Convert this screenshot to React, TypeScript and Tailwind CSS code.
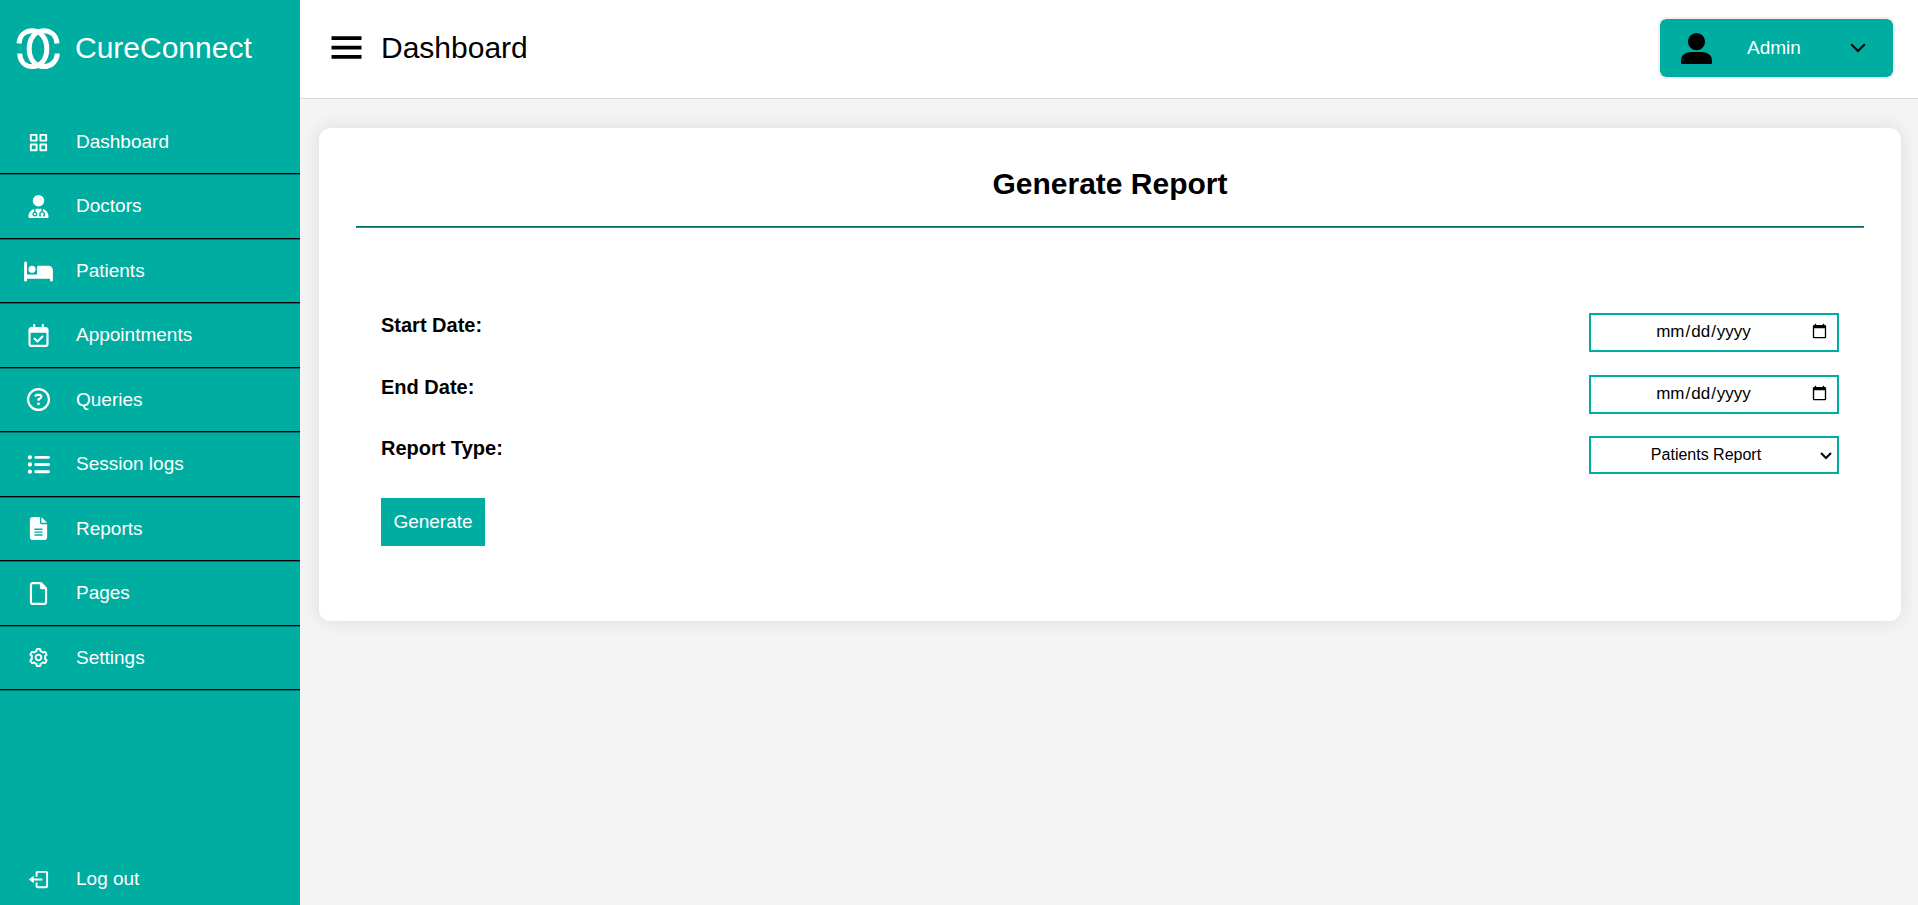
import { useState } from "react";
import type { ReactNode } from "react";
import { BiCog, BiGridAlt, BiLogOut, BiMenu } from "react-icons/bi";
import { FaBed, FaFileLines, FaListUl, FaRegCalendarCheck, FaRegCircleQuestion, FaRegFile, FaUserDoctor } from "react-icons/fa6";

const navItems: { label: string; icon: ReactNode }[] = [
  { label: "Dashboard", icon: <BiGridAlt /> },
  { label: "Doctors", icon: <FaUserDoctor /> },
  { label: "Patients", icon: <FaBed className="h-[23px] w-[29px]" /> },
  { label: "Appointments", icon: <FaRegCalendarCheck /> },
  { label: "Queries", icon: <FaRegCircleQuestion /> },
  { label: "Session logs", icon: <FaListUl /> },
  { label: "Reports", icon: <FaFileLines /> },
  { label: "Pages", icon: <FaRegFile /> },
  { label: "Settings", icon: <BiCog /> },
];

function Logo() {
  return (
    <svg viewBox="0 0 44 42" className="h-[42px] w-11" fill="none" stroke="currentColor" strokeWidth="5" aria-hidden="true">
      <path d="M3 15.500C3.500 8 8.500 2.800 16.500 2.800c8.500 0 14.300 7.700 14.300 17.900s-5.800 17.900-14.300 17.900C8.500 38.600 4 33 3.700 25.500" />
      <path d="M41 15.500C40.500 8 35.500 2.800 27.500 2.800c-8.500 0-14.300 7.700-14.300 17.900s5.800 17.900 14.300 17.900c8 0 13.500-5.600 13.800-13.100" />
    </svg>
  );
}

function PersonIcon() {
  return (
    <svg viewBox="0 0 31 31" className="size-[31px] text-black" fill="currentColor" aria-hidden="true">
      <circle cx="15.500" cy="8.600" r="8.600" />
      <path d="M1 31Q0 31 0 30v-2.500C0 22.500 4.500 19 10 19h11c5.500 0 10 3.500 10 8.500V30q0 1-1 1z" />
    </svg>
  );
}

function Sidebar() {
  return (
    <aside className="flex w-[300px] shrink-0 flex-col bg-[#00ada1] text-white">
      <a href="#home" className="flex h-[111px] items-start gap-[15px] pt-7 pl-4">
        <Logo />
        <span className="text-[30px] leading-10">CureConnect</span>
      </a>
      <nav className="flex grow flex-col justify-between">
        <ul className="grid h-[580px] auto-rows-fr">
          {navItems.map((item) => (
            <li key={item.label} className="flex flex-col">
              <a href={"#" + item.label} className="flex grow items-center text-[19px]">
                <span className="flex w-[76px] justify-center text-[23px]">{item.icon}</span>
                {item.label}
              </a>
              <hr className="border border-x-0 border-t-black border-b-[#006e68]" />
            </li>
          ))}
        </ul>
        <a href="#logout" className="mb-3 flex h-7 items-center text-[19px]">
          <span className="flex w-[76px] justify-center text-[23px]"><BiLogOut /></span>
          Log out
        </a>
      </nav>
    </aside>
  );
}

function Header() {
  return (
    <header className="flex h-[99px] items-start justify-between border-b border-[#dcdcdc] bg-white pr-[23px] pl-6">
      <div className="flex items-center gap-3 pt-[25px]">
        <button type="button" aria-label="Toggle menu"><BiMenu className="size-[45px]" /></button>
        <h1 className="text-[30px]">Dashboard</h1>
      </div>
      <button type="button" className="mt-[17px] flex h-[62px] w-[237px] items-center rounded-lg border-2 border-[#f0f0f0] bg-[#00ada1] bg-clip-padding pr-[27px] pl-[21px] text-[19px] text-white">
        <PersonIcon />
        <span className="ml-[35px]">Admin</span>
        <svg viewBox="0 0 16 10" className="ml-auto h-[10px] w-4 text-black" fill="none" stroke="currentColor" strokeWidth="2" aria-hidden="true">
          <path d="M1.200 1.200 8 8l6.800-6.800" />
        </svg>
      </button>
    </header>
  );
}

const control = "w-[250px] border-2 border-[#00ada1] bg-white text-center font-light text-black";
const dateControl =
  control +
  " h-[39px] pr-[7px] pb-[2px] pl-[7px] text-[17px] [&::-webkit-datetime-edit]:flex [&::-webkit-datetime-edit]:justify-center";

export default function App() {
  const [start, setStart] = useState("");
  const [end, setEnd] = useState("");
  return (
    <div className="flex min-h-screen bg-[#f4f4f4] font-['Liberation_Sans',sans-serif] text-black">
      <Sidebar />
      <div className="flex grow flex-col">
        <Header />
        <main className="mt-[29px] mr-[17px] ml-[19px] rounded-xl bg-white px-[37px] pt-9 pb-[75px] shadow-[0_0_20px_rgba(0,0,0,0.1)]">
          <h2 className="text-center text-[30px] leading-10 font-bold">Generate Report</h2>
          <hr className="mt-[22px] border border-x-0 border-t-[#00655e] border-b-[#00ada1]" />
          <form className="mt-[85px] flex flex-col px-[25px]" onSubmit={(e) => e.preventDefault()}>
            <div className="flex h-[62px] items-start justify-between">
              <label htmlFor="start" className="text-[20px] leading-6 font-bold">Start Date:</label>
              <input id="start" type="date" value={start} onChange={(e) => setStart(e.target.value)} className={dateControl} />
            </div>
            <div className="flex h-[61px] items-start justify-between">
              <label htmlFor="end" className="text-[20px] leading-6 font-bold">End Date:</label>
              <input id="end" type="date" value={end} onChange={(e) => setEnd(e.target.value)} className={dateControl} />
            </div>
            <div className="flex h-[62px] items-start justify-between">
              <label htmlFor="type" className="text-[20px] leading-6 font-bold">Report Type:</label>
              <div className="relative flex">
                <select id="type" className={control + " h-[38px] appearance-none pr-4 text-[16px]"}>
                  <option>Patients Report</option>
                  <option>Doctors Report</option>
                </select>
                <svg viewBox="0 0 12 8" className="pointer-events-none absolute top-4 right-[7px] h-2 w-3" fill="none" stroke="currentColor" strokeWidth="2" aria-hidden="true">
                  <path d="M1 1l5 5 5-5" />
                </svg>
              </div>
            </div>
            <button type="submit" className="h-12 w-[104px] self-start bg-[#00ada1] text-[19px] text-white">Generate</button>
          </form>
        </main>
      </div>
    </div>
  );
}
